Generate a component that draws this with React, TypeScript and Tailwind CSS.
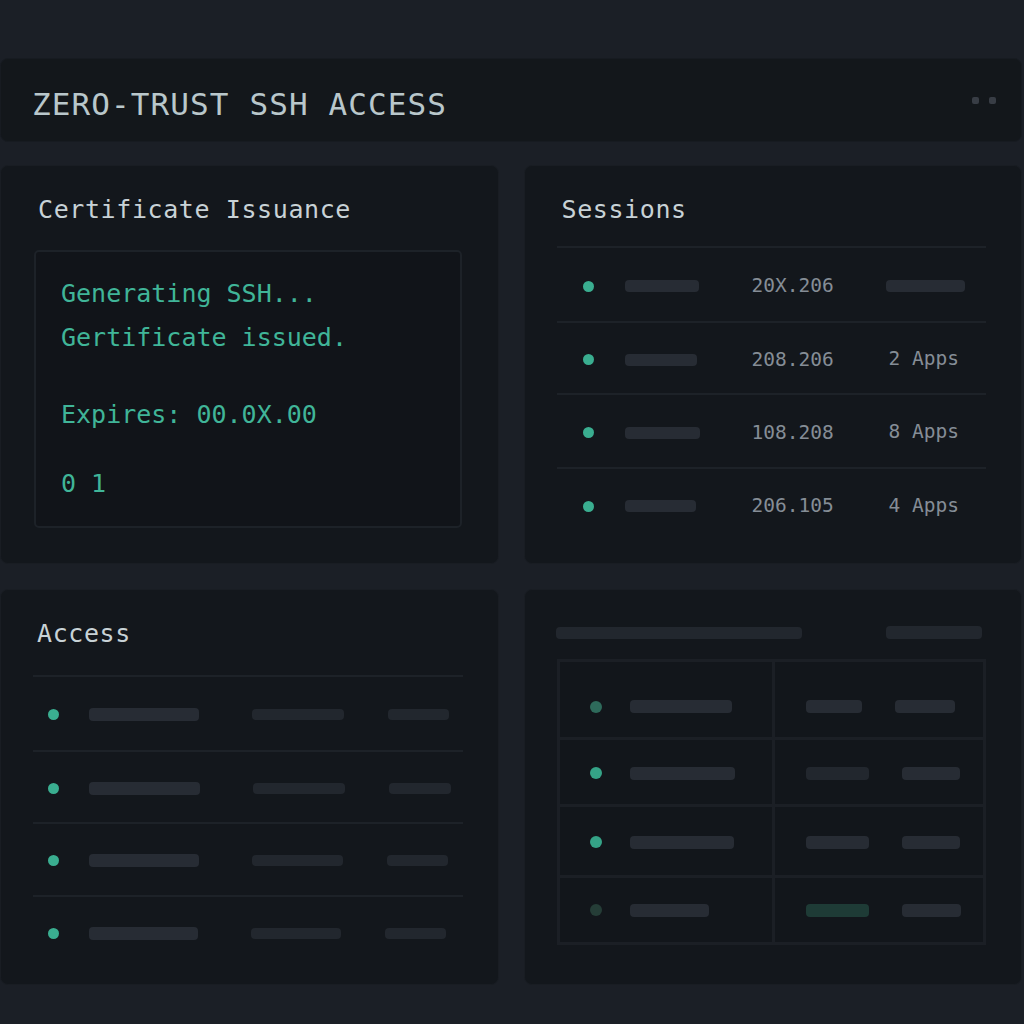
import React from "react";

const mono = "font-['DejaVu_Sans_Mono','Liberation_Mono',monospace]";

function Bar({ w, h = 12, dark = false, green = false }: { w: number; h?: number; dark?: boolean; green?: boolean }) {
  const cls = green ? "bg-[#1e3b36]" : dark ? "bg-[#22272e]" : "bg-[#272c34]";
  return <span className={`block rounded-[4px] ${cls}`} style={{ width: w, height: h }} />;
}

const sessions = [
  { ip: "20X.206", bar: 74, last: null as string | null },
  { ip: "208.206", bar: 72, last: "2 Apps" },
  { ip: "108.208", bar: 75, last: "8 Apps" },
  { ip: "206.105", bar: 71, last: "4 Apps" },
];
const sessionHeights = [75, 72, 74, 73];

const access = [
  { a: 110, b: 92, c: 61 },
  { a: 111, b: 92, c: 62 },
  { a: 110, b: 91, c: 61 },
  { a: 109, b: 90, c: 61 },
];
const accessHeights = [75, 72, 73, 72];

const table = [
  { h: 75, dot: "bg-[#2e6a5b]", bar: 102, b1: 56, b2: 60, green: false, pt: "pt-[14px]" },
  { h: 64, dot: "bg-[#35a387]", bar: 105, b1: 63, b2: 58, green: false, pt: "pt-[2px]" },
  { h: 68, dot: "bg-[#35a387]", bar: 104, b1: 63, b2: 58, green: false, pt: "pt-[2px]" },
  { h: 64, dot: "bg-[#253d37]", bar: 79, b1: 63, b2: 59, green: true, pt: "pt-[0px]" },
];

export default function App() {
  return (
    <div className={`w-[1024px] h-[1024px] bg-[#1b1f26] pt-[58px] pr-[2px] ${mono}`}>
      {/* Header */}
      <div className="h-[84px] bg-[#13171b] rounded-[8px] border border-[#171b21] flex items-center justify-between pl-[31px] pr-[25px] pt-[7px]">
        <div className="text-[31px] leading-[36px] tracking-[1.1px] text-[#b9c7cb]">ZERO-TRUST SSH ACCESS</div>
        <div className="flex gap-[10px] -mt-[7px]">
          <span className="block w-[7px] h-[7px] rounded-[2px] bg-[#383d45]" />
          <span className="block w-[7px] h-[7px] rounded-[2px] bg-[#383d45]" />
        </div>
      </div>

      <div className="mt-[23px] grid grid-cols-2 grid-rows-[399px_396px] gap-[25px]">
        {/* Certificate Issuance */}
        <div className="bg-[#13171c] rounded-[8px] border border-[#191d23] pt-[29px]">
          <div className="pl-[37px] text-[25px] leading-[30px] tracking-[0.6px] text-[#c8d2d6]">Certificate Issuance</div>
          <div className="ml-[33px] mt-[25px] w-[428px] h-[278px] rounded-[5px] border-2 border-[#1d2228] bg-[#111419] pl-[25px] pt-[27px] text-[25px] leading-[30px] text-[#40b598]">
            <div>Generating SSH...</div>
            <div className="mt-[14px]">Gertificate issued.</div>
            <div className="mt-[47px]">Expires: 00.0X.00</div>
            <div className="mt-[39px]">0 1</div>
          </div>
        </div>

        {/* Sessions */}
        <div className="bg-[#13171c] rounded-[8px] border border-[#191d23] pt-[29px]">
          <div className="pl-[37px] text-[25px] leading-[30px] tracking-[0.6px] text-[#c8d2d6]">Sessions</div>
          <div className="ml-[32px] mt-[21px] w-[429px]">
            {sessions.map((s, i) => (
              <div
                key={i}
                className="flex items-center border-t-2 border-[#1d2228] pt-[3px]"
                style={{ height: sessionHeights[i] }}
              >
                <div className="w-[68px] pl-[26px]">
                  <span className="block w-[11px] h-[11px] rounded-full bg-[#3aae90]" />
                </div>
                <div className="w-[127px]">
                  <Bar w={s.bar} h={12} />
                </div>
                <div className="w-[134px] text-[19.5px] leading-[24px] text-[#858d96]">{s.ip}</div>
                <div className="flex-1">
                  {s.last ? (
                    <span className="pl-[3px] text-[19.5px] leading-[24px] text-[#858d96]">{s.last}</span>
                  ) : (
                    <Bar w={79} h={12} />
                  )}
                </div>
              </div>
            ))}
          </div>
        </div>

        {/* Access */}
        <div className="bg-[#13171c] rounded-[8px] border border-[#191d23] pt-[29px]">
          <div className="pl-[36px] text-[25px] leading-[30px] tracking-[0.6px] text-[#c8d2d6]">Access</div>
          <div className="ml-[32px] mt-[26px] w-[430px]">
            {access.map((r, i) => (
              <div
                key={i}
                className="flex items-center border-t-2 border-[#1d2228] pt-[2px]"
                style={{ height: accessHeights[i] }}
              >
                <span className="ml-[15px] block w-[11px] h-[11px] rounded-full bg-[#3aae90]" />
                <span className="ml-[30px]">
                  <Bar w={r.a} h={13} />
                </span>
                <span className="ml-[53px]">
                  <Bar w={r.b} h={11} dark />
                </span>
                <span className="ml-[44px]">
                  <Bar w={r.c} h={11} dark />
                </span>
              </div>
            ))}
          </div>
        </div>

        {/* Table card */}
        <div className="bg-[#13171c] rounded-[8px] border border-[#191d23] pt-[36px]">
          <div className="flex items-center pl-[31px]">
            <Bar w={246} h={12} dark />
            <span className="ml-[84px]">
              <Bar w={96} h={13} dark />
            </span>
          </div>
          <div className="ml-[32px] mt-[20px] w-[429px] bg-[#1b1f25] p-[3px] grid grid-cols-[212px_208px] gap-[3px]">
            {table.map((r, i) => (
              <React.Fragment key={i}>
                <div className={`bg-[#12161b] flex items-center ${r.pt}`} style={{ height: r.h }}>
                  <span className={`ml-[30px] block w-[12px] h-[12px] rounded-full ${r.dot}`} />
                  <span className="ml-[28px]">
                    <Bar w={r.bar} h={13} />
                  </span>
                </div>
                <div className={`bg-[#12161b] flex items-center ${r.pt}`} style={{ height: r.h }}>
                  <span className="ml-[31px]">
                    <Bar w={r.b1} h={13} green={r.green} dark={i === 1} />
                  </span>
                  <span className="ml-[33px]">
                    <Bar w={r.b2} h={13} />
                  </span>
                </div>
              </React.Fragment>
            ))}
          </div>
        </div>
      </div>
    </div>
  );
}
